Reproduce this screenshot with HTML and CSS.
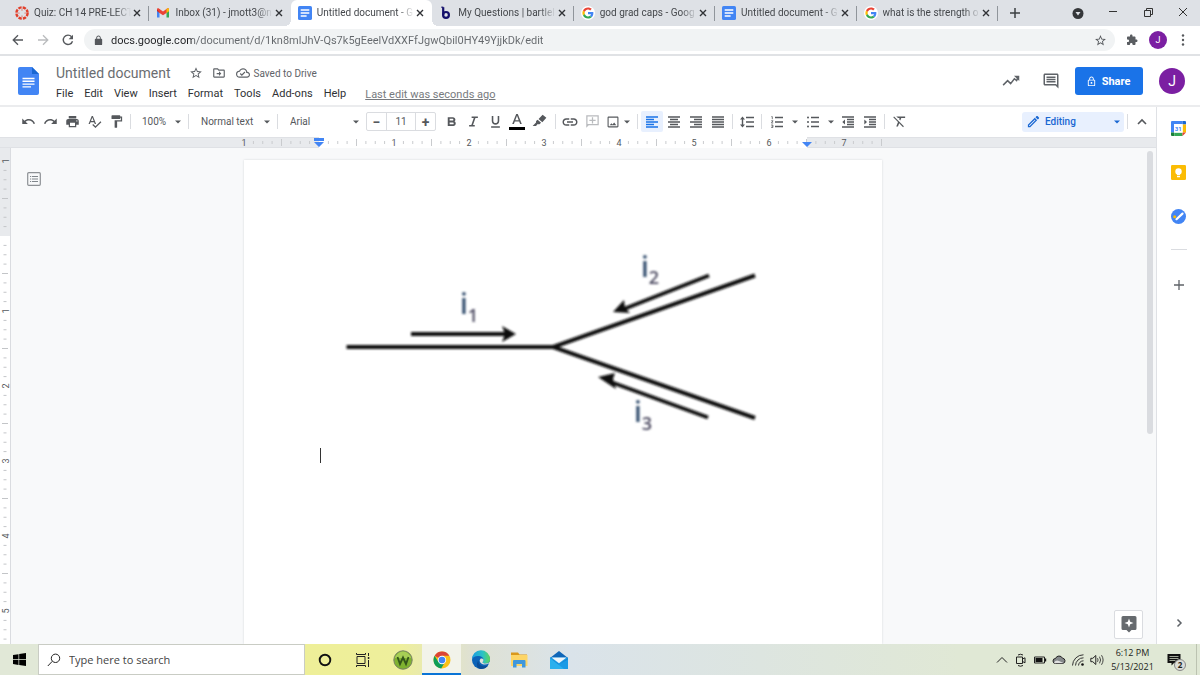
FILE: index.html
```html
<!DOCTYPE html>
<html lang="en">
<head>
<meta charset="utf-8">
<title>Untitled document - Google Docs</title>
<link rel="stylesheet" href="styles.css">
</head>
<body>
<svg class="sprite" aria-hidden="true">
  <symbol id="g-logo" viewBox="-6 -6 60 60">
    <circle cx="24" cy="24" r="30" fill="#fff"/>
    <path fill="#ea4335" d="M24 9.500c3.540 0 6.710 1.220 9.210 3.600l6.850-6.850C35.900 2.380 30.470 0 24 0 14.620 0 6.510 5.380 2.560 13.220l7.980 6.190C12.430 13.720 17.740 9.500 24 9.500z"/>
    <path fill="#4285f4" d="M46.980 24.550c0-1.570-.15-3.090-.38-4.550H24v9.020h12.940c-.58 2.960-2.260 5.480-4.780 7.180l7.730 6c4.510-4.180 7.090-10.360 7.090-17.650z"/>
    <path fill="#fbbc05" d="M10.530 28.590c-.48-1.450-.76-2.990-.76-4.590s.27-3.140.76-4.590l-7.980-6.190C.92 16.460 0 20.120 0 24c0 3.880.92 7.540 2.560 10.780l7.970-6.190z"/>
    <path fill="#34a853" d="M24 48c6.480 0 11.930-2.130 15.890-5.810l-7.730-6c-2.150 1.450-4.920 2.300-8.160 2.300-6.260 0-11.570-4.220-13.470-9.910l-7.980 6.190C6.510 42.620 14.620 48 24 48z"/>
  </symbol>
  <symbol id="docs-tab" viewBox="0 0 13 13">
    <rect width="13" height="13" rx="1.500" fill="#4285f4"/>
    <path stroke="#fff" stroke-width="1.300" d="M2.500 3.700h8M2.500 6.500h8M2.500 9.300h5.500"/>
  </symbol>
  <symbol id="close" viewBox="0 0 8 8">
    <path d="M1 1l6 6M7 1L1 7" stroke="#303236" stroke-width="1.400" fill="none"/>
  </symbol>
  <symbol id="caret" viewBox="0 0 6 4"><path d="M0 .5h6L3 3.500z" fill="currentColor"/></symbol>
  <symbol id="star" viewBox="0 0 24 24"><path fill="currentColor" d="M22 9.240l-7.190-.62L12 2 9.190 8.630 2 9.240l5.460 4.730L5.820 21 12 17.270 18.180 21l-1.630-7.030L22 9.240zM12 15.400l-3.760 2.270 1-4.280-3.320-2.880 4.380-.38L12 6.100l1.710 4.040 4.380.38-3.320 2.880 1 4.280L12 15.400z"/></symbol>
  <symbol id="lock" viewBox="0 0 24 24"><path fill="currentColor" d="M18 8h-1V6c0-2.760-2.240-5-5-5S7 3.240 7 6v2H6c-1.100 0-2 .9-2 2v10c0 1.100.9 2 2 2h12c1.100 0 2-.9 2-2V10c0-1.100-.9-2-2-2zM9 6c0-1.660 1.340-3 3-3s3 1.340 3 3v2H9V6z"/></symbol>
</svg>

<header class="tabbar">
  <nav class="tabs" aria-label="Browser tabs">
    <div class="tab">
      <svg class="favicon" viewBox="0 0 14 14"><circle cx="7" cy="7" r="5.600" fill="none" stroke="#e13f2b" stroke-width="2.400" stroke-dasharray="3.300 1.100"/><g fill="#e13f2b"><circle cx="7" cy="3.900" r=".6"/><circle cx="7" cy="10.100" r=".6"/><circle cx="3.900" cy="7" r=".6"/><circle cx="10.100" cy="7" r=".6"/></g></svg>
      <span class="tab-title">Quiz: CH 14 PRE-LECT</span>
      <button class="tab-close" aria-label="Close tab"><svg><use href="#close"/></svg></button>
    </div>
    <div class="tab no-line">
      <svg class="favicon" viewBox="0 0 14 14"><path fill="#4285f4" d="M1 4v7.500h2.500V6z"/><path fill="#34a853" d="M13 4v7.500h-2.500V6z"/><path fill="#fbbc04" d="M10.500 3.300L13 2.800V5l-2.500 2z"/><path fill="#c5221f" d="M1 3.200L3.500 3v4L1 5z"/><path fill="#ea4335" d="M1 3.300C1 2 2.400 2 3.200 2.700L7 5.500l3.800-2.800C11.600 2 13 2 13 3.300L10.500 7 7 9.300 3.500 7z"/><path fill="#fbbc04" d="M10.500 3v4L13 5V3.300C13 2 11.500 2.100 10.500 3z"/></svg>
      <span class="tab-title">Inbox (31) - jmott3@n</span>
      <button class="tab-close" aria-label="Close tab"><svg><use href="#close"/></svg></button>
    </div>
    <div class="tab active">
      <svg class="favicon"><use href="#docs-tab"/></svg>
      <span class="tab-title">Untitled document - G</span>
      <button class="tab-close" aria-label="Close tab"><svg><use href="#close"/></svg></button>
    </div>
    <div class="tab">
      <svg class="favicon" viewBox="0 0 14 14"><path d="M4.200 1.200v8" stroke="#14106b" stroke-width="2.200" fill="none"/><circle cx="7" cy="8.900" r="2.900" stroke="#14106b" stroke-width="2.200" fill="none"/><path d="M2.300 1.200h2" stroke="#14106b" stroke-width="1.200"/></svg>
      <span class="tab-title">My Questions | bartlel</span>
      <button class="tab-close" aria-label="Close tab"><svg><use href="#close"/></svg></button>
    </div>
    <div class="tab">
      <svg class="favicon"><use href="#g-logo"/></svg>
      <span class="tab-title">god grad caps - Goog</span>
      <button class="tab-close" aria-label="Close tab"><svg><use href="#close"/></svg></button>
    </div>
    <div class="tab">
      <svg class="favicon"><use href="#docs-tab"/></svg>
      <span class="tab-title">Untitled document - G</span>
      <button class="tab-close" aria-label="Close tab"><svg><use href="#close"/></svg></button>
    </div>
    <div class="tab">
      <svg class="favicon"><use href="#g-logo"/></svg>
      <span class="tab-title">what is the strength o</span>
      <button class="tab-close" aria-label="Close tab"><svg><use href="#close"/></svg></button>
    </div>
  </nav>
  <button class="new-tab" aria-label="New tab"><svg viewBox="0 0 10 10"><path d="M5 0v10M0 5h10" stroke="#3c4043" stroke-width="1.500"/></svg></button>
  <div class="window-controls">
    <button aria-label="Search tabs"><svg viewBox="0 0 12 12"><circle cx="6" cy="6.500" r="5.500" fill="#35373a"/><path d="M3.500 5h5L6 8.500z" fill="#dee1e6"/></svg></button>
    <button aria-label="Minimize"><svg viewBox="0 0 12 12"><path d="M2 4.500h8" stroke="#333"/></svg></button>
    <button aria-label="Restore"><svg viewBox="0 0 12 12"><path d="M2.500 3.500h6v6h-6zM4.500 3.500v-2h6v6h-2" stroke="#333" fill="none"/></svg></button>
    <button aria-label="Close window"><svg viewBox="0 0 12 12"><path d="M2 1l8 8M10 1L2 9" stroke="#333" fill="none"/></svg></button>
  </div>
</header>

<div class="addressbar">
  <button class="nav-btn" aria-label="Back"><svg viewBox="0 0 12 12"><path d="M11 6H1.500M6 1.200L1.200 6 6 10.800" fill="none" stroke="#55585c" stroke-width="1.300"/></svg></button>
  <button class="nav-btn" aria-label="Forward"><svg viewBox="0 0 12 12"><path d="M1 6h9.500M6 1.200L10.800 6 6 10.800" fill="none" stroke="#babcbe" stroke-width="1.300"/></svg></button>
  <button class="nav-btn" aria-label="Reload"><svg viewBox="0 0 12 12"><path d="M10.500 7.200A4.700 4.700 0 1 1 9.600 2.800" fill="none" stroke="#55585c" stroke-width="1.400"/><path d="M11 .8v4.400H6.600z" fill="#55585c"/></svg></button>
  <div class="omnibox">
    <svg class="omni-lock"><use href="#lock"/></svg>
    <input class="url" type="text" aria-label="Address" value="docs.google.com/document/d/1kn8mlJhV-Qs7k5gEeelVdXXFfJgwQbil0HY49YjjkDk/edit">
    <button class="omni-star" aria-label="Bookmark"><svg><use href="#star"/></svg></button>
  </div>
  <button class="ext" aria-label="Extensions"><svg viewBox="0 0 24 24"><path fill="#5a5d61" d="M20.500 11H19V7c0-1.100-.9-2-2-2h-4V3.500C13 2.120 11.880 1 10.500 1S8 2.120 8 3.500V5H4c-1.100 0-1.990.9-1.990 2v3.800H3.500c1.490 0 2.700 1.210 2.700 2.700s-1.210 2.700-2.700 2.700H2V20c0 1.100.9 2 2 2h3.800v-1.500c0-1.490 1.210-2.700 2.700-2.700 1.490 0 2.700 1.210 2.700 2.700V22H17c1.100 0 2-.9 2-2v-4h1.500c1.380 0 2.500-1.120 2.500-2.500S21.880 11 20.500 11z"/></svg></button>
  <button class="avatar small" aria-label="Profile J">J</button>
  <button class="dots" aria-label="Browser menu"><svg viewBox="0 0 4 12"><g fill="#55585c"><circle cx="2" cy="1.500" r="1.200"/><circle cx="2" cy="6" r="1.200"/><circle cx="2" cy="10.500" r="1.200"/></g></svg></button>
</div>

<div class="doc-header">
  <a class="doc-logo" href="#" aria-label="Docs home"><svg viewBox="0 0 21 28"><path fill="#4285f4" d="M2 0h12l7 7v19a2 2 0 0 1-2 2H2a2 2 0 0 1-2-2V2a2 2 0 0 1 2-2z"/><path fill="#1967d2" d="M14 0l7 7h-7z"/><path stroke="#fff" stroke-width="1.400" d="M4.500 11.500h12M4.500 14.300h12M4.500 17.100h12M4.500 19.900h8.500"/></svg></a>
  <div class="doc-meta">
    <div class="title-row">
      <h1>Untitled document</h1>
      <button class="mini" aria-label="Star"><svg><use href="#star"/></svg></button>
      <button class="mini" aria-label="Move"><svg viewBox="0 0 24 24"><path fill="currentColor" d="M20 6h-8l-2-2H4c-1.100 0-2 .9-2 2v12c0 1.100.9 2 2 2h16c1.100 0 2-.9 2-2V8c0-1.100-.9-2-2-2zm0 12H4V6h5.200l2 2H20v10zm-8-1l4-4-4-4v3H8v2h4v3z"/></svg></button>
      <span class="saved"><svg viewBox="0 0 24 24"><path fill="currentColor" d="M19.350 10.040A7.490 7.490 0 0 0 12 4C9.110 4 6.600 5.640 5.350 8.040A5.994 5.994 0 0 0 0 14c0 3.310 2.690 6 6 6h13c2.760 0 5-2.240 5-5 0-2.640-2.050-4.780-4.650-4.960zM19 18H6c-2.210 0-4-1.790-4-4s1.790-4 4-4h.71a5.500 5.500 0 0 1 10.790 1.500v.5H19c1.660 0 3 1.340 3 3s-1.340 3-3 3zm-9-3.820l-2.090-2.090L6.500 13.500 10 17l6.010-6.010-1.410-1.410z"/></svg>Saved to Drive</span>
    </div>
    <nav class="menus" aria-label="Document menus">
      <button>File</button><button>Edit</button><button>View</button><button>Insert</button><button>Format</button><button>Tools</button><button>Add-ons</button><button>Help</button>
      <a class="last-edit" href="#">Last edit was seconds ago</a>
    </nav>
  </div>
  <div class="doc-actions">
    <button class="act" aria-label="Activity"><svg viewBox="0 0 24 24"><path fill="none" stroke="#5f6368" stroke-width="2" d="M1.500 17.500l6-6 4 4 5-6.500 0 0 3 2.500L22 6"/><path fill="#5f6368" d="M16 5h7v7z"/></svg></button>
    <button class="act" aria-label="Comments"><svg viewBox="0 0 24 24"><path fill="#5f6368" d="M21.990 4c0-1.100-.89-2-1.990-2H4c-1.100 0-2 .9-2 2v12c0 1.100.9 2 2 2h14l4 4-.01-18zM20 4v13.170L18.830 16H4V4h16zM6 12h12v2H6zm0-3h12v2H6zm0-3h12v2H6z"/></svg></button>
    <button class="share"><svg viewBox="0 0 24 24"><path fill="#fff" d="M18 8h-1V6c0-2.760-2.240-5-5-5S7 3.240 7 6v2H6c-1.100 0-2 .9-2 2v10c0 1.100.9 2 2 2h12c1.100 0 2-.9 2-2V10c0-1.100-.9-2-2-2zM9 6c0-1.660 1.340-3 3-3s3 1.340 3 3v2H9V6zm9 14H6V10h12v10zm-6-3c1.100 0 2-.9 2-2s-.9-2-2-2-2 .9-2 2 .9 2 2 2z"/></svg>Share</button>
    <button class="avatar" aria-label="Account J">J</button>
  </div>
</div>

<div class="body">
  <main class="editor">
    <div class="toolbar" role="toolbar" aria-label="Formatting">
      <button class="tool" aria-label="Undo"><svg viewBox="0 0 24 24"><path fill="currentColor" d="M12.500 8c-2.650 0-5.050.99-6.900 2.600L2 7v9h9l-3.620-3.620c1.390-1.160 3.160-1.880 5.120-1.880 3.540 0 6.550 2.310 7.600 5.500l2.370-.78C21.080 11.030 17.150 8 12.500 8z"/></svg></button>
      <button class="tool" aria-label="Redo"><svg viewBox="0 0 24 24"><path fill="currentColor" d="M18.400 10.600C16.550 8.990 14.150 8 11.500 8c-4.650 0-8.580 3.030-9.960 7.220L3.900 16c1.050-3.190 4.050-5.500 7.600-5.500 1.950 0 3.730.72 5.120 1.880L13 16h9V7l-3.600 3.600z"/></svg></button>
      <button class="tool" aria-label="Print"><svg viewBox="0 0 24 24"><path fill="currentColor" d="M19 8H5c-1.660 0-3 1.340-3 3v6h4v4h12v-4h4v-6c0-1.660-1.340-3-3-3zm-3 11H8v-5h8v5zm3-7c-.55 0-1-.45-1-1s.45-1 1-1 1 .45 1 1-.45 1-1 1zm-1-9H6v4h12V3z"/></svg></button>
      <button class="tool" aria-label="Spelling"><svg viewBox="0 0 24 24"><path fill="currentColor" d="M12.450 16h2.090L9.430 3H7.570L2.460 16h2.090l1.120-3h5.640l1.140 3zm-6.020-5L8.500 5.480 10.570 11H6.430zm15.160.59l-8.090 8.090L9.830 16l-1.410 1.410 5.090 5.090L23 13l-1.410-1.410z"/></svg></button>
      <button class="tool" aria-label="Paint format"><svg viewBox="0 0 24 24"><path fill="currentColor" d="M18 4V3c0-.55-.45-1-1-1H5c-.55 0-1 .45-1 1v4c0 .55.45 1 1 1h12c.55 0 1-.45 1-1V6h1v4H9v11c0 .55.45 1 1 1h2c.55 0 1-.45 1-1v-9h8V4h-3z"/></svg></button>
      <i class="sep"></i>
      <span class="pick zoom"><select aria-label="Zoom"><option>100%</option></select><svg class="caret"><use href="#caret"/></svg></span>
      <i class="sep"></i>
      <span class="pick"><select aria-label="Styles"><option>Normal text</option></select><svg class="caret"><use href="#caret"/></svg></span>
      <i class="sep"></i>
      <span class="pick"><select aria-label="Font"><option>Arial</option></select><svg class="caret"><use href="#caret"/></svg></span>
      <span class="size">
        <button aria-label="Decrease font size">−</button><input type="text" aria-label="Font size" value="11"><button aria-label="Increase font size">+</button>
      </span>
      <span class="group">
        <button class="tool" aria-label="Bold"><svg viewBox="0 0 24 24"><path fill="currentColor" d="M16.600 11.790c.97-.67 1.650-1.770 1.650-2.790 0-2.260-1.750-4-4-4H6v14h9.040c2.090 0 3.710-1.700 3.710-3.790 0-1.520-.86-2.820-2.150-3.420zM9 7.500h4.500c.83 0 1.500.67 1.500 1.500s-.67 1.500-1.500 1.500H9v-3zm5 9H9v-3h5c.83 0 1.500.67 1.500 1.500s-.67 1.500-1.500 1.500z"/></svg></button>
        <button class="tool" aria-label="Italic"><svg viewBox="0 0 24 24"><path fill="currentColor" d="M9 4v2.500h3.400L8.500 17.500H5V20h9v-2.500h-2.800l3.900-11H19V4z"/></svg></button>
        <button class="tool" aria-label="Underline"><svg viewBox="0 0 24 24"><path fill="currentColor" d="M12 17c3.310 0 6-2.690 6-6V3h-2.500v8c0 1.930-1.570 3.500-3.500 3.500S8.500 12.930 8.500 11V3H6v8c0 3.310 2.690 6 6 6zm-7 2.500V22h14v-2.500H5z"/></svg></button>
        <button class="tool wide" aria-label="Text color"><svg viewBox="0 0 18 18"><path fill="currentColor" d="M8.200 1h1.600l4 10h-1.700l-.9-2.400H6.800L5.900 11H4.200zM7.300 7.200h3.400L9 2.700z"/><path d="M1 14h16v3H1z" fill="#000"/></svg></button>
        <button class="tool" aria-label="Highlight color"><svg viewBox="0 0 24 24"><path fill="currentColor" d="M17 1l6 5-6.500 7-6-5.200zM9 9l5.500 4.800-2.500 2.700H8.500L6.500 19H1l5.500-5.500V11z"/></svg></button>
      </span>
      <i class="sep"></i>
      <button class="tool" aria-label="Insert link"><svg class="big" viewBox="0 0 24 24"><path fill="currentColor" d="M3.900 12c0-1.710 1.390-3.100 3.100-3.100h4V7H7c-2.760 0-5 2.240-5 5s2.240 5 5 5h4v-1.900H7c-1.710 0-3.100-1.390-3.100-3.100zM8 13h8v-2H8v2zm9-6h-4v1.900h4c1.710 0 3.100 1.390 3.100 3.100s-1.390 3.100-3.100 3.100h-4V17h4c2.760 0 5-2.240 5-5s-2.240-5-5-5z"/></svg></button>
      <button class="tool faded" aria-label="Add comment"><svg viewBox="0 0 24 24"><path fill="currentColor" fill-rule="evenodd" d="M2 2h20v16H6l-4 4zM4 4v12h16V4zm7 1h2v4h4v2h-4v4h-2v-4H7V9h4z"/></svg></button>
      <button class="tool combo tight" aria-label="Insert image"><svg viewBox="1 1 22 22"><path fill="currentColor" d="M20 4v16H4V4h16m0-2H4c-1.100 0-2 .9-2 2v16c0 1.100.9 2 2 2h16c1.100 0 2-.9 2-2V4c0-1.100-.9-2-2-2zm-5.860 10.860l-3 3.870L9 14.140 6 18h12l-3.860-5.140z"/></svg><svg class="caret"><use href="#caret"/></svg></button>
      <i class="sep"></i>
      <button class="tool lines on" aria-label="Align left"><svg viewBox="0 0 12 12"><path stroke="currentColor" stroke-width="1.400" d="M0 1h12M0 3.500h8M0 6h12M0 8.500h8M0 11h12"/></svg></button>
      <button class="tool lines" aria-label="Align center"><svg viewBox="0 0 12 12"><path stroke="currentColor" stroke-width="1.300" d="M0 1h12M2 3.500h8M0 6h12M2 8.500h8M0 11h12"/></svg></button>
      <button class="tool lines" aria-label="Align right"><svg viewBox="0 0 12 12"><path stroke="currentColor" stroke-width="1.300" d="M0 1h12M4 3.500h8M0 6h12M4 8.500h8M0 11h12"/></svg></button>
      <button class="tool lines" aria-label="Justify"><svg viewBox="0 0 12 12"><path stroke="currentColor" stroke-width="1.300" d="M0 1h12M0 3.500h12M0 6h12M0 8.500h12M0 11h12"/></svg></button>
      <i class="sep"></i>
      <button class="tool" aria-label="Line spacing"><svg class="spacing" viewBox="0 0 14 12"><path stroke="currentColor" stroke-width="1.400" fill="none" d="M6 1.500h8M6 6h8M6 10.500h8M2.500 2v8"/><path fill="currentColor" d="M0 3.500L2.500.5 5 3.500zM0 8.500l2.500 3 2.500-3z"/></svg></button>
      <i class="sep"></i>
      <button class="tool combo" aria-label="Numbered list"><svg viewBox="0 0 12 12"><path stroke="currentColor" stroke-width="1.300" d="M4 1.500h8M4 6h8M4 10.500h8"/><path stroke="currentColor" stroke-width=".8" fill="none" d="M.4.600h.9v2.600M.2 4.800h1.900L.4 7h1.800M.2 9h1.700v2.500H.2M.6 10.200h1.200"/></svg><svg class="caret"><use href="#caret"/></svg></button>
      <button class="tool combo" aria-label="Bulleted list"><svg viewBox="0 0 12 12"><path stroke="currentColor" stroke-width="1.300" d="M4 1.500h8M4 6h8M4 10.500h8"/><g fill="currentColor"><circle cx="1" cy="1.500" r="1"/><circle cx="1" cy="6" r="1"/><circle cx="1" cy="10.500" r="1"/></g></svg><svg class="caret"><use href="#caret"/></svg></button>
      <button class="tool lines" aria-label="Decrease indent"><svg viewBox="0 0 12 12"><path stroke="currentColor" stroke-width="1.300" d="M0 1h12M5 3.500h7M5 6h7M5 8.500h7M0 11h12"/><path fill="currentColor" d="M3 3.500v5L.3 6z"/></svg></button>
      <button class="tool lines" aria-label="Increase indent"><svg viewBox="0 0 12 12"><path stroke="currentColor" stroke-width="1.300" d="M0 1h12M5 3.500h7M5 6h7M5 8.500h7M0 11h12"/><path fill="currentColor" d="M.3 3.500v5L3 6z"/></svg></button>
      <i class="sep"></i>
      <button class="tool" aria-label="Clear formatting"><svg viewBox="0 0 24 24"><path fill="currentColor" d="M6 4h15v2.500h-6.200l-1.500 3.700-1.900-1.900.7-1.800H9.600L7.500 4.400zM3.300 4L2 5.300l7.600 7.600L6.800 20h2.700l2-5.200L17.700 21l1.300-1.300z"/></svg></button>
      <span class="pick mode"><svg class="pencil" viewBox="0 0 24 24"><path fill="currentColor" d="M14.060 9.020l.92.920L5.920 19H5v-.92l9.060-9.060M17.660 3c-.25 0-.51.1-.7.290l-1.830 1.830 3.750 3.750 1.830-1.830c.39-.39.39-1.020 0-1.410l-2.340-2.340c-.2-.2-.45-.29-.71-.29zm-3.600 3.190L3 17.250V21h3.750L17.810 9.940l-3.750-3.750z"/></svg><select aria-label="Editing mode"><option>Editing</option></select><svg class="caret"><use href="#caret"/></svg></span>
      <i class="sep"></i>
      <button class="tool lines" aria-label="Hide the menus"><svg viewBox="0 0 12 12"><path fill="none" stroke="currentColor" stroke-width="1.600" d="M2 8l4-4 4 4"/></svg></button>
    </div>

    <div class="h-ruler">
      <svg viewBox="0 0 638 11">
        <defs><pattern id="h-ticks" width="75" height="11" patternUnits="userSpaceOnUse"><path stroke="#c9cbce" d="M9.400 4v3M18.750 4v3M28.100 4v3M37.500 2v7M46.900 4v3M56.250 4v3M65.600 4v3"/></pattern></defs>
        <rect x="75" width="488" height="11" fill="#fff"/>
        <rect width="638" height="11" fill="url(#h-ticks)"/>
        <g class="ruler-num"><text x="0" y="9">1</text><text x="150" y="9">1</text><text x="225" y="9">2</text><text x="300" y="9">3</text><text x="375" y="9">4</text><text x="450" y="9">5</text><text x="525" y="9">6</text><text x="600" y="9">7</text></g>
        <path fill="#4285f4" d="M70 1h10v3H70zM70 5h10l-5 5zM558 5h10l-5 5z"/>
      </svg>
    </div>

    <div class="workspace">
      <svg class="v-ruler" viewBox="0 0 11 496" preserveAspectRatio="xMidYMin slice">
        <defs><pattern id="v-ticks" y="13" width="11" height="75" patternUnits="userSpaceOnUse"><path stroke="#c3c5c8" d="M3.500 9.400h3M3.500 18.750h3M3.500 28.100h3M2 37.500h6M3.500 46.900h3M3.500 56.250h3M3.500 65.600h3"/></pattern></defs>
        <rect width="11" height="88" fill="#e8eaed"/><rect y="88" width="11" height="408" fill="#fff"/>
        <rect y="13" width="11" height="483" fill="url(#v-ticks)"/>
        <path d="M10.500 0v496" stroke="#dadce0"/>
        <g class="ruler-num"><text transform="translate(9 13) rotate(-90)">1</text><text transform="translate(9 163) rotate(-90)">1</text><text transform="translate(9 238) rotate(-90)">2</text><text transform="translate(9 313) rotate(-90)">3</text><text transform="translate(9 388) rotate(-90)">4</text><text transform="translate(9 463) rotate(-90)">5</text></g>
      </svg>
      <div class="canvas">
        <button class="outline" aria-label="Show document outline"><svg viewBox="0 0 14 14"><rect x=".7" y=".7" width="12.600" height="12.600" rx="1" fill="none" stroke="#8d9195" stroke-width="1.200"/><path d="M5 4.500h6M5 7h6M5 9.500h6M3 4.500h1.200M3 7h1.200M3 9.500h1.200" stroke="#80868b"/></svg></button>
        <article class="page">
          <svg class="figure" viewBox="319 235 488 210" role="img" aria-label="Three currents meeting at a junction">
            <defs><filter id="soft" x="-5%" y="-5%" width="110%" height="110%"><feGaussianBlur stdDeviation="0.800"/></filter></defs>
            <g filter="url(#soft)">
              <g fill="none" stroke="#111" stroke-width="4">
                <path d="M346.500 347H553M755 275.500L553 347l202 71"/>
                <path d="M411 334h96M709 275.500L624 309M708 417.500L608 381" stroke-width="3.800"/>
              </g>
              <path fill="#111" d="M516 334l-14-8 3 8-3 8zM613 312l11-12 1 8 5 5zM598 377l17-4-2 6 3 10z"/>
              <g class="figure-label">
                <text x="460" y="314">i<tspan class="sub" dy="8">1</tspan></text>
                <text x="641" y="277">i<tspan class="sub" dy="7">2</tspan></text>
                <text x="634" y="422">i<tspan class="sub" dy="8">3</tspan></text>
              </g>
            </g>
          </svg>
          <div class="cursor-line"></div>
        </article>
        <div class="scroll-thumb"></div>
        <button class="explore" aria-label="Explore"><svg viewBox="0 0 16 17"><path fill="#666a6e" d="M2 0h12a1.500 1.500 0 0 1 1.500 1.500v11A1.500 1.500 0 0 1 14 14h-3.500L8 16.500 5.500 14H2A1.500 1.500 0 0 1 .5 12.500v-11A1.500 1.500 0 0 1 2 0z"/><path fill="#fff" d="M8 2.500l1.200 3.300L12.500 7 9.200 8.200 8 11.500 6.800 8.200 3.500 7l3.300-1.200z"/></svg></button>
      </div>
    </div>
  </main>

  <aside class="side-panel">
    <button aria-label="Calendar"><svg viewBox="0 0 15 15"><path fill="#4285f4" d="M1 0h10.500v3.500H3.500v8H0V1a1 1 0 0 1 1-1z"/><path fill="#1967d2" d="M11.500 0H14a1 1 0 0 1 1 1v2.500h-3.500z"/><path fill="#fbbc04" d="M11.500 3.500H15v8h-3.500z"/><path fill="#188038" d="M0 11.500h3.500V15H1a1 1 0 0 1-1-1z"/><path fill="#34a853" d="M3.500 11.500h8V15h-8z"/><path fill="#ea4335" d="M11.500 11.500H15L11.500 15z"/><path fill="#fff" d="M3 3h8.700v8.700H3z"/><text class="cal-day" x="7.300" y="10">31</text></svg></button>
    <button aria-label="Keep"><svg viewBox="0 0 15 15"><rect width="15" height="15" rx="1.200" fill="#fbbc04"/><circle cx="7.500" cy="6.500" r="3.200" fill="#fff"/><path fill="#fff" d="M6 8.500h3v1.700H6zM6 11h3v1.200H6z"/></svg></button>
    <button aria-label="Tasks"><svg viewBox="0 0 15 15"><circle cx="7.500" cy="7.500" r="7.500" fill="#4285f4"/><circle cx="3.700" cy="7.700" r="1.500" fill="#fbbc04"/><path d="M5.500 10.200L11.500 4.600" stroke="#fff" stroke-width="2.200" stroke-linecap="round"/></svg></button>
    <hr>
    <button class="plain" aria-label="Get add-ons"><svg viewBox="0 0 12 12"><path d="M6 1v10M1 6h10" stroke="#5f6368" stroke-width="1.300"/></svg></button>
    <button class="plain collapse" aria-label="Hide side panel"><svg viewBox="0 0 12 12"><path d="M4.500 2.500L8 6 4.500 9.500" stroke="#5f6368" stroke-width="1.500" fill="none"/></svg></button>
  </aside>
</div>

<footer class="taskbar">
  <button class="start" aria-label="Start"><svg viewBox="0 0 13 13"><path fill="#000" d="M0 2l5.500-.8v5H0zM6.200 1.100L13 0v6.200H6.200zM0 6.900h5.500v5L0 11.100zM6.200 6.900H13V13l-6.800-1z"/></svg></button>
  <label class="search"><svg viewBox="0 0 14 14"><circle cx="8.500" cy="5.300" r="4.200" fill="none" stroke="#222"/><path d="M5.300 8.300L.8 13" stroke="#222"/></svg><input type="text" placeholder="Type here to search" aria-label="Search"></label>
  <div class="apps">
    <button aria-label="Cortana"><svg viewBox="0 0 20 20"><circle cx="10" cy="10" r="5.300" fill="none" stroke="#111" stroke-width="1.900"/></svg></button>
    <button aria-label="Task view"><svg viewBox="0 0 20 20"><path fill="none" stroke="#222" d="M3 6.500h8v7H3zM2.500 3v1.500h9V3M2.500 17v-1.500h9V17M14.500 3v3M14.500 10v7"/><path d="M13.800 7h1.500v2h-1.500z" fill="#222"/></svg></button>
    <button aria-label="Webroot"><svg viewBox="0 0 20 20"><circle cx="10" cy="10" r="9.200" fill="#7fb230" stroke="#777f66"/><path d="M2 8a8.200 8.200 0 0 1 16 0z" fill="#a7ce55"/><path d="M4.500 7l2.500 7L10 7.500 13 14l2.500-7" fill="none" stroke="#34551b" stroke-width="1.800"/></svg></button>
    <button class="running" aria-label="Chrome"><svg viewBox="0 0 20 20"><circle cx="10" cy="10" r="8.500" fill="#fbc116"/><path fill="#db4437" d="M10 10L2.600 5.800a8.500 8.500 0 0 1 14.800 0H10z"/><path fill="#0f9d58" d="M2.600 5.800a8.500 8.500 0 0 0 6.600 12.700L13 12l-3-2-3.600 2z"/><circle cx="10" cy="10" r="4.200" fill="#fff"/><circle cx="10" cy="10" r="3.300" fill="#4285f4"/></svg></button>
    <button aria-label="Edge"><svg viewBox="0 0 20 20"><defs><linearGradient id="edge-a" x1="0" x2="1"><stop offset="0" stop-color="#1b9de2"/><stop offset=".6" stop-color="#2bc2c4"/><stop offset="1" stop-color="#5fd65a"/></linearGradient></defs><circle cx="10" cy="10" r="9" fill="#0c63b8"/><path fill="url(#edge-a)" d="M1 9.500a9 9 0 0 1 18-.5c.3 3-2 4.500-4.500 4.500-2 0-3-.7-3-1.300 0-.6 1-.8 1-2.300C12.500 7.500 10 6 7 6 4 6 1.500 7.500 1 9.500z"/><path fill="#0b4d97" d="M7.500 10.500c-.5 3.500 3 6.500 7 5.500 1.200-.3 2.300-.8 2.700-.5A9 9 0 0 1 10 19c-4 0-5.500-5-2.500-8.500z"/><path fill="#dfe2da" d="M9.500 8.700c-1 1-1.300 2.800.5 4.500s5 1.800 7.700.3c.6-.3 1 .2.700.8L20 13V9c-.3 3-2.500 4.500-5.500 4.500-2 0-3-.7-3-1.300 0-.6 1-.8 1-2.300 0-1-1.800-1.800-3-1.200z"/></svg></button>
    <button aria-label="File Explorer"><svg viewBox="0 0 20 20"><path fill="#d9981d" d="M1 2.500h7l1.500 2H17V8H1z"/><path fill="#fdd566" d="M1 5h16.500v11H1z"/><path fill="#3f97dc" d="M3 17.500V11a1 1 0 0 1 1-1h10.500a1 1 0 0 1 1 1v6.500H12v-3.500H6.500v3.500z"/></svg></button>
    <button aria-label="Mail"><svg viewBox="0 0 20 20"><path fill="#1066b8" d="M10 1l9 7H1z"/><path fill="#1a9be6" d="M1 7.500h18V19H1z"/><path fill="#1583d2" d="M1 8l9 6.300L19 8v1.500L1 19z"/><path fill="#2bb0ee" d="M1 8l14 11H1z"/><path fill="#eef5fa" d="M2.500 7.500h15L10 13.200z"/></svg></button>
  </div>
  <div class="tray">
    <button aria-label="Show hidden icons"><svg viewBox="0 0 14 14"><path d="M2 9.500l5-5 5 5" fill="none" stroke="#222"/></svg></button>
    <button aria-label="Meet Now"><svg viewBox="0 0 14 14"><path d="M2.500 4h6v6.500h-6zM8.500 6l2.500-1.200v5L8.500 8.500M4 2q2.500-1.500 5 0M4 12.500q2.500 1.500 5 0" fill="none" stroke="#222"/></svg></button>
    <button aria-label="Battery"><svg viewBox="0 0 14 14"><path d="M1.500 4h10v6h-10z" fill="none" stroke="#222"/><path d="M2.500 5h7v4h-7zM12 5.500h1.200v3H12z" fill="#111"/></svg></button>
    <button aria-label="OneDrive"><svg viewBox="0 0 14 14"><path d="M3.500 10.500a2.500 2.500 0 0 1 0-5 3.800 3.800 0 0 1 7-.3 2.700 2.700 0 0 1 .5 5.300z" fill="#85898b" stroke="#222"/><path d="M2 9.800q2-3.500 5-1.800l5 2.200H3z" fill="#dfe0df"/></svg></button>
    <button aria-label="Network"><svg viewBox="0 0 14 14"><path d="M1.500 12.500A11 11 0 0 1 12.500 1.800M4.500 12.500a8 8 0 0 1 8-7.700M7.500 12.500a5 5 0 0 1 5-4.700" fill="none" stroke="#333"/><circle cx="11.500" cy="11.500" r="1.300" fill="#111"/></svg></button>
    <button aria-label="Volume"><svg viewBox="0 0 14 14"><path d="M.8 5.300h2l3-2.800v9l-3-2.800h-2z" fill="none" stroke="#222"/><path d="M7.500 5.200q1.200 1.800 0 3.600M9.500 3.700q2.200 3.300 0 6.600M11.500 2.200q3.200 4.800 0 9.600" fill="none" stroke="#333" stroke-width=".9"/></svg></button>
    <time class="clock"><span>6:12 PM</span><span>5/13/2021</span></time>
    <button class="notify" aria-label="2 notifications"><svg viewBox="0 0 14 14"><path d="M.5 1h13v9H7L4.500 12.500V10h-4z" fill="#111"/><path d="M2.500 3.500h9M2.500 5.500h9M2.500 7.500h6" stroke="#dfe8d3" stroke-width=".7"/></svg><span class="badge">2</span></button>
    <i class="peek"></i>
  </div>
</footer>
</body>
</html>
```
FILE: styles.css
```css
* { box-sizing: border-box; }

body {
  margin: 0;
  height: 100vh;
  display: flex;
  flex-direction: column;
  overflow: hidden;
  background: #fff;
  color: #3c4043;
  font-family: Roboto, "Liberation Sans", sans-serif;
  font-size: 11px;
}

button, input, select {
  font: inherit;
  color: inherit;
  border: 0;
  margin: 0;
  padding: 0;
  background: none;
}

button { display: flex; align-items: center; justify-content: center; flex: none; }
svg { display: block; flex: none; }
.sprite { position: absolute; width: 0; height: 0; }

/* Browser tabs */
.tabbar {
  flex: none;
  display: flex;
  height: 26px;
  padding-left: 8px;
  background: #dee1e6;
  font-size: 10px;
  color: #45484c;
}
.tabs { display: flex; flex: 0 1 990px; min-width: 0; }
.tab {
  position: relative;
  flex: 1 1 0;
  min-width: 0;
  display: flex;
  align-items: center;
  gap: 5px;
  padding: 0 8px 0 7px;
}
.tab::after {
  content: "";
  position: absolute;
  right: 0;
  top: 6px;
  width: 1px;
  height: 15px;
  background: #90959b;
}
.tab.no-line::after { display: none; }
.tab.active { background: #fff; border-radius: 6px 6px 0 0; }
.tab.active::before,
.tab.active::after {
  content: "";
  position: absolute;
  top: auto;
  bottom: 0;
  width: 6px;
  height: 6px;
}
.tab.active::before { left: -6px; background: radial-gradient(circle at 0 0, transparent 6px, #fff 6px); }
.tab.active::after { right: -6px; background: radial-gradient(circle at 100% 0, transparent 6px, #fff 6px); }
.favicon { width: 14px; height: 14px; }
.tab-title {
  flex: 1;
  min-width: 0;
  margin-right: -5px;
  overflow: hidden;
  white-space: nowrap;
  line-height: 16px;
  mask-image: linear-gradient(90deg, #000 82%, transparent 98%);
}
.tab-close svg { width: 8px; height: 8px; }
.new-tab { width: 34px; }
.new-tab svg { width: 10px; height: 10px; }
.window-controls { display: flex; margin-left: auto; }
.window-controls button { width: 35px; }
.window-controls svg { width: 12px; height: 12px; }

/* Address bar */
.addressbar {
  flex: none;
  display: flex;
  align-items: center;
  height: 30px;
  padding: 0 9px 0 5px;
  border-bottom: 2px solid #e0e2e5;
}
.nav-btn { width: 25px; height: 22px; }
.nav-btn svg { width: 12px; height: 12px; }
.omnibox {
  flex: 1;
  display: flex;
  align-items: center;
  gap: 7px;
  height: 22px;
  margin-left: 4px;
  padding: 0 8px 0 9px;
  border-radius: 11px;
  background: #f1f3f4;
}
.omni-lock { width: 11px; height: 11px; color: #55585c; }
.url {
  flex: 1;
  min-width: 0;
  height: 20px;
  font-size: 11px;
  color: transparent;
  background: linear-gradient(90deg, #202124 82px, #63676b 82px);
  background-clip: text;
}
.omni-star svg { width: 13px; height: 13px; color: #55585c; }
.ext { width: 34px; }
.ext svg { width: 12px; height: 12px; }
.avatar {
  width: 26px;
  height: 26px;
  border-radius: 50%;
  background: #7b1fa2;
  color: #fff;
  font-size: 14px;
}
.avatar.small { width: 18px; height: 18px; font-size: 9px; }
.dots { width: 17px; margin-left: 7px; }
.dots svg { width: 4px; height: 12px; }

/* Document header */
.doc-header {
  flex: none;
  display: flex;
  align-items: flex-start;
  height: 51px;
  padding: 0 15px 0 18px;
  border-bottom: 2px solid #ebecee;
}
.doc-logo { margin: 11px 17px 0 0; }
.doc-logo svg { width: 21px; height: 28px; }
.title-row { display: flex; align-items: center; height: 20px; margin-top: 7px; color: #5f6368; }
h1 { margin: 0 14px 0 0; font-size: 14px; font-weight: 400; line-height: 20px; color: #6a6d71; }
.mini { width: 23px; }
.mini svg, .saved svg { width: 14px; height: 14px; }
.saved { display: flex; align-items: center; gap: 4px; margin-left: 5px; font-size: 10px; }
.menus { display: flex; align-items: center; gap: 11px; height: 22px; }
.menus button { line-height: 20px; color: #2f3134; }
.last-edit { margin-left: 8px; color: #777a7e; text-underline-offset: 1px; }
.doc-actions { display: flex; align-items: center; margin: 11px 0 0 auto; height: 28px; }
.act { width: 40px; }
.act svg { width: 18px; height: 18px; }
.share {
  gap: 5px;
  width: 68px;
  height: 28px;
  margin: 0 16px 0 4px;
  padding-right: 2px;
  border-radius: 3px;
  background: #1a73e8;
  color: #fff;
  font-weight: 700;
}
.share svg { width: 11px; height: 11px; }

/* Editor area */
.body { flex: 1; min-height: 0; display: flex; }
.editor { flex: 1; min-width: 0; display: flex; flex-direction: column; }
.toolbar {
  flex: none;
  display: flex;
  align-items: center;
  height: 30px;
  padding: 0 3px 1px 17px;
  color: #55585c;
}
.tool { width: 22px; height: 21px; border-radius: 2px; }
.tool svg { width: 15px; height: 15px; }
.tool svg.big { width: 18px; height: 18px; }
.tool svg.spacing { width: 14px; height: 12px; }
.tool.lines svg { width: 12px; height: 12px; }
.tool.wide svg { width: 18px; height: 18px; }
.tool.faded { color: #b9bbbe; }
.tool.on { background: #e8f0fe; color: #1a73e8; }
.tool.combo { width: auto; gap: 9px; padding: 0 3px 0 6px; }
.tool.combo.tight { gap: 5px; padding: 0 4px; }
.tool.combo svg { width: 12px; height: 12px; }
.tool.combo svg.caret, .caret { width: 6px; height: 4px; }
.sep { flex: none; width: 1px; height: 15px; margin: 0 3px; background: #dadce0; }
.pick { display: grid; align-items: center; width: 82px; height: 20px; font-size: 10px; }
.pick.zoom { width: 51px; }
.pick select { grid-area: 1 / 1; appearance: none; width: 100%; height: 20px; padding-left: 9px; }
.pick.zoom select { padding-left: 8px; }
.pick .caret { grid-area: 1 / 1; justify-self: end; margin-right: 4px; pointer-events: none; }
.pick.mode {
  width: 102px;
  margin-left: auto;
  border-radius: 3px;
  background: #e8f0fe;
  color: #1967d2;
  font-weight: 500;
}
.pick.mode select { padding-left: 23px; }
.pencil { grid-area: 1 / 1; width: 15px; height: 15px; margin-left: 4px; }
.size {
  flex: none;
  display: flex;
  width: 70px;
  height: 19px;
  margin-left: 3px;
  border: 1px solid #dadce0;
  border-radius: 2px;
  font-size: 10px;
}
.size button { width: 19px; font-size: 14px; font-weight: 700; line-height: 16px; }
.size input {
  flex: 1;
  min-width: 0;
  text-align: center;
  border: solid #dadce0;
  border-width: 0 1px;
}
.group { display: flex; margin: 0 2px 0 4px; }

.h-ruler {
  flex: none;
  display: flex;
  justify-content: center;
  padding: 0 41px 0 11px;
  background: #e8eaed;
  box-shadow: inset 0 1px #dfe1e5, inset 0 -1px #dfe1e5;
}
.h-ruler svg { width: 638px; height: 11px; overflow: visible; }
.ruler-num { font-size: 9px; fill: #55585c; text-anchor: middle; }

.workspace { flex: 1; min-height: 0; display: flex; }
.v-ruler { width: 11px; height: 100%; }
.canvas {
  position: relative;
  flex: 1;
  min-width: 0;
  display: flex;
  justify-content: center;
  padding: 12px 41px 0 0;
  background: #f8f9fa;
  overflow: hidden;
}
.page {
  flex: 0 1 638px;
  padding: 75px 75px 0;
  background: #fff;
  box-shadow: 0 0 2px #d4d6da;
}
.figure { width: 100%; height: auto; }
.figure-label { font-family: "Open Sans", sans-serif; font-size: 28px; font-weight: 600; fill: #34506f; }
.sub { font-size: 18px; fill: #4c4a60; }
.cursor-line { width: 1px; height: 15px; margin: 3px 0 0 1px; background: #333; }
.outline { position: absolute; left: 16px; top: 24px; }
.outline svg { width: 14px; height: 14px; }
.scroll-thumb {
  position: absolute;
  right: 3px;
  top: 3px;
  width: 6px;
  height: 57%;
  border-radius: 3px;
  background: #dadce0;
}
.explore {
  position: absolute;
  right: 13px;
  bottom: 5px;
  width: 29px;
  height: 29px;
  border: 1px solid #dadce0;
  border-radius: 2px;
  background: #fff;
}
.explore svg { width: 16px; height: 17px; }

/* Side panel */
.side-panel {
  flex: none;
  display: flex;
  flex-direction: column;
  align-items: center;
  width: 44px;
  padding: 14px 0 15px;
  border-left: 1px solid #dfe1e5;
}
.side-panel button { margin-bottom: 29px; }
.side-panel svg { width: 15px; height: 15px; }
.side-panel hr { width: 16px; height: 1px; margin: -4px 0 29px; border: 0; background: #dadce0; }
.side-panel .plain svg { width: 12px; height: 12px; }
.side-panel .collapse { margin: auto 0 0; }
.cal-day { font-size: 6px; font-weight: 700; fill: #4285f4; text-anchor: middle; }

/* Taskbar */
.taskbar {
  flex: none;
  display: flex;
  height: 31px;
  background: linear-gradient(90deg, #e1e8d7 0, #e1e8d7 38px, #eeef98 305px, #eeef9c 400px, #dfe1d2 470px, #dae3ea 570px, #dde5e0 760px, #e0e8d5 960px);
  font-family: "Open Sans", "Noto Sans", sans-serif;
  color: #1d1f1a;
}
.start { width: 38px; }
.start svg { width: 13px; height: 13px; }
.search {
  display: flex;
  align-items: center;
  gap: 8px;
  width: 267px;
  padding: 0 8px;
  border: 1px solid #c9ccc4;
  background: #fff;
}
.search svg { width: 14px; height: 14px; }
.search input { flex: 1; min-width: 0; font-size: 11px; }
.search input::placeholder { color: #444; opacity: 1; }
.apps { display: flex; }
.apps button { width: 39px; border: solid transparent; border-width: 2px 0; }
.apps .running { background: #f2f3ea; border-bottom-color: #0a74d6; }
.apps svg { width: 20px; height: 20px; }
.tray { display: flex; align-items: center; margin-left: auto; }
.tray button { width: 19px; height: 31px; }
.tray svg { width: 14px; height: 14px; }
.clock { display: flex; flex-direction: column; align-items: center; width: 53px; font-size: 9px; line-height: 14px; }
.tray .notify { position: relative; width: 30px; }
.badge {
  position: absolute;
  right: 3px;
  bottom: 4px;
  width: 12px;
  height: 12px;
  border: 1px solid #888;
  border-radius: 50%;
  background: #dcded8;
  font-size: 8px;
  font-weight: 700;
  line-height: 10px;
  text-align: center;
}
.peek { width: 1px; height: 31px; margin: 0 3px 0 7px; background: #bcc3b1; }
```
